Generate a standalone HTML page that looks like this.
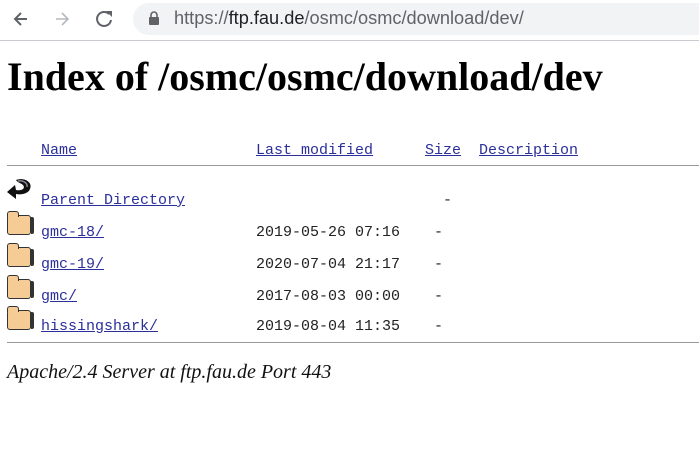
<!DOCTYPE html>
<html><head><meta charset="utf-8"><style>
body{margin:0;width:699px;height:452px;background:#fff;position:relative;overflow:hidden;font-family:"Liberation Serif",serif}
.a{position:absolute;white-space:nowrap}
.m{font-family:"Liberation Mono",monospace;font-size:15px;color:#222;line-height:18px}
a{color:#2b2f9b;text-decoration:underline}
.f{position:absolute;left:7px;width:24px;height:20px;background:#f6cc96;border:1.5px solid #333;border-radius:3px;box-sizing:border-box}
.f:before{content:"";position:absolute;left:-1.5px;top:-5px;width:10px;height:5px;background:#f6cc96;border:1.5px solid #333;border-bottom:none;border-radius:3px 3px 0 0}
.f:after{content:"";position:absolute;right:-4px;top:1px;width:3px;height:17px;background:#333;border-radius:0 2px 2px 0}
</style></head><body>
<div class="a" style="left:0;top:0;width:699px;height:40px;background:#fff;border-bottom:1px solid #c8cbd0"></div>
<svg class="a" style="left:12px;top:8px" width="110" height="22" viewBox="0 0 110 22">
<path d="M15 11H3M9 5L3 11L9 17" stroke="#5f6368" stroke-width="2" fill="none"/>
<path d="M56 11H44M50 5L56 11L50 17" stroke="#b6b9bd" stroke-width="1.6" fill="none"/>
<path d="M97 6A7 7 0 1 0 99 12" stroke="#5f6368" stroke-width="2" fill="none"/><path d="M94 3L100 3L100 9Z" fill="#5f6368"/>
</svg>
<div class="a" style="left:133px;top:3px;width:580px;height:32px;border-radius:16px;background:#f1f3f4"></div>
<svg class="a" style="left:148px;top:11px" width="12" height="14"><path d="M3 6V4a3 3 0 0 1 6 0v2" stroke="#5f6368" stroke-width="1.6" fill="none"/><rect x="1" y="6" width="10" height="8" rx="1" fill="#5f6368"/></svg>
<div class="a" style="left:174px;top:8px;font-family:'Liberation Sans',sans-serif;font-size:18.2px;color:#5f6368;line-height:20px">https://<span style="color:#202124">ftp.fau.de</span>/osmc/osmc/download/dev/</div>
<div class="a" style="left:7px;top:54px;font-size:40px;font-weight:bold;color:#000;line-height:46px">Index of /osmc/osmc/download/dev</div>
<div class="a m" style="left:41px;top:142px"><a>Name</a></div>
<div class="a m" style="left:256px;top:142px"><a>Last modified</a></div>
<div class="a m" style="left:425px;top:142px"><a>Size</a></div>
<div class="a m" style="left:479px;top:142px"><a>Description</a></div>
<div class="a" style="left:7px;top:165px;width:692px;border-top:1px solid #999"></div>
<svg class="a" style="left:6px;top:177px" width="28" height="26" viewBox="0 0 28 26"><path d="M10 3C18 0 27 5 24 12C22 17 15 18 10 17L10 22L1 15L9 8L10 13C15 14 20 12 17 8C15 6 12 6 10 3Z" fill="#111"/><path d="M12 4C17 3 22 6 21 10" stroke="#889" stroke-width="1.5" fill="none"/></svg>
<div class="a m" style="left:41px;top:192px"><a>Parent Directory</a></div>
<div class="a m" style="left:443px;top:192px">-</div>
<div class="f" style="top:215px"></div>
<div class="a m" style="left:41px;top:224px"><a>gmc-18/</a></div>
<div class="a m" style="left:256px;top:224px">2019-05-26 07:16</div>
<div class="a m" style="left:434px;top:224px">-</div>
<div class="f" style="top:247px"></div>
<div class="a m" style="left:41px;top:256px"><a>gmc-19/</a></div>
<div class="a m" style="left:256px;top:256px">2020-07-04 21:17</div>
<div class="a m" style="left:434px;top:256px">-</div>
<div class="f" style="top:279px"></div>
<div class="a m" style="left:41px;top:288px"><a>gmc/</a></div>
<div class="a m" style="left:256px;top:288px">2017-08-03 00:00</div>
<div class="a m" style="left:434px;top:288px">-</div>
<div class="f" style="top:310px"></div>
<div class="a m" style="left:41px;top:318px"><a>hissingshark/</a></div>
<div class="a m" style="left:256px;top:318px">2019-08-04 11:35</div>
<div class="a m" style="left:434px;top:318px">-</div>
<div class="a" style="left:7px;top:342px;width:692px;border-top:1px solid #999"></div>
<div class="a" style="left:7px;top:360px;font-size:20px;font-style:italic;color:#111;line-height:24px">Apache/2.4 Server at ftp.fau.de Port 443</div>
</body></html>
